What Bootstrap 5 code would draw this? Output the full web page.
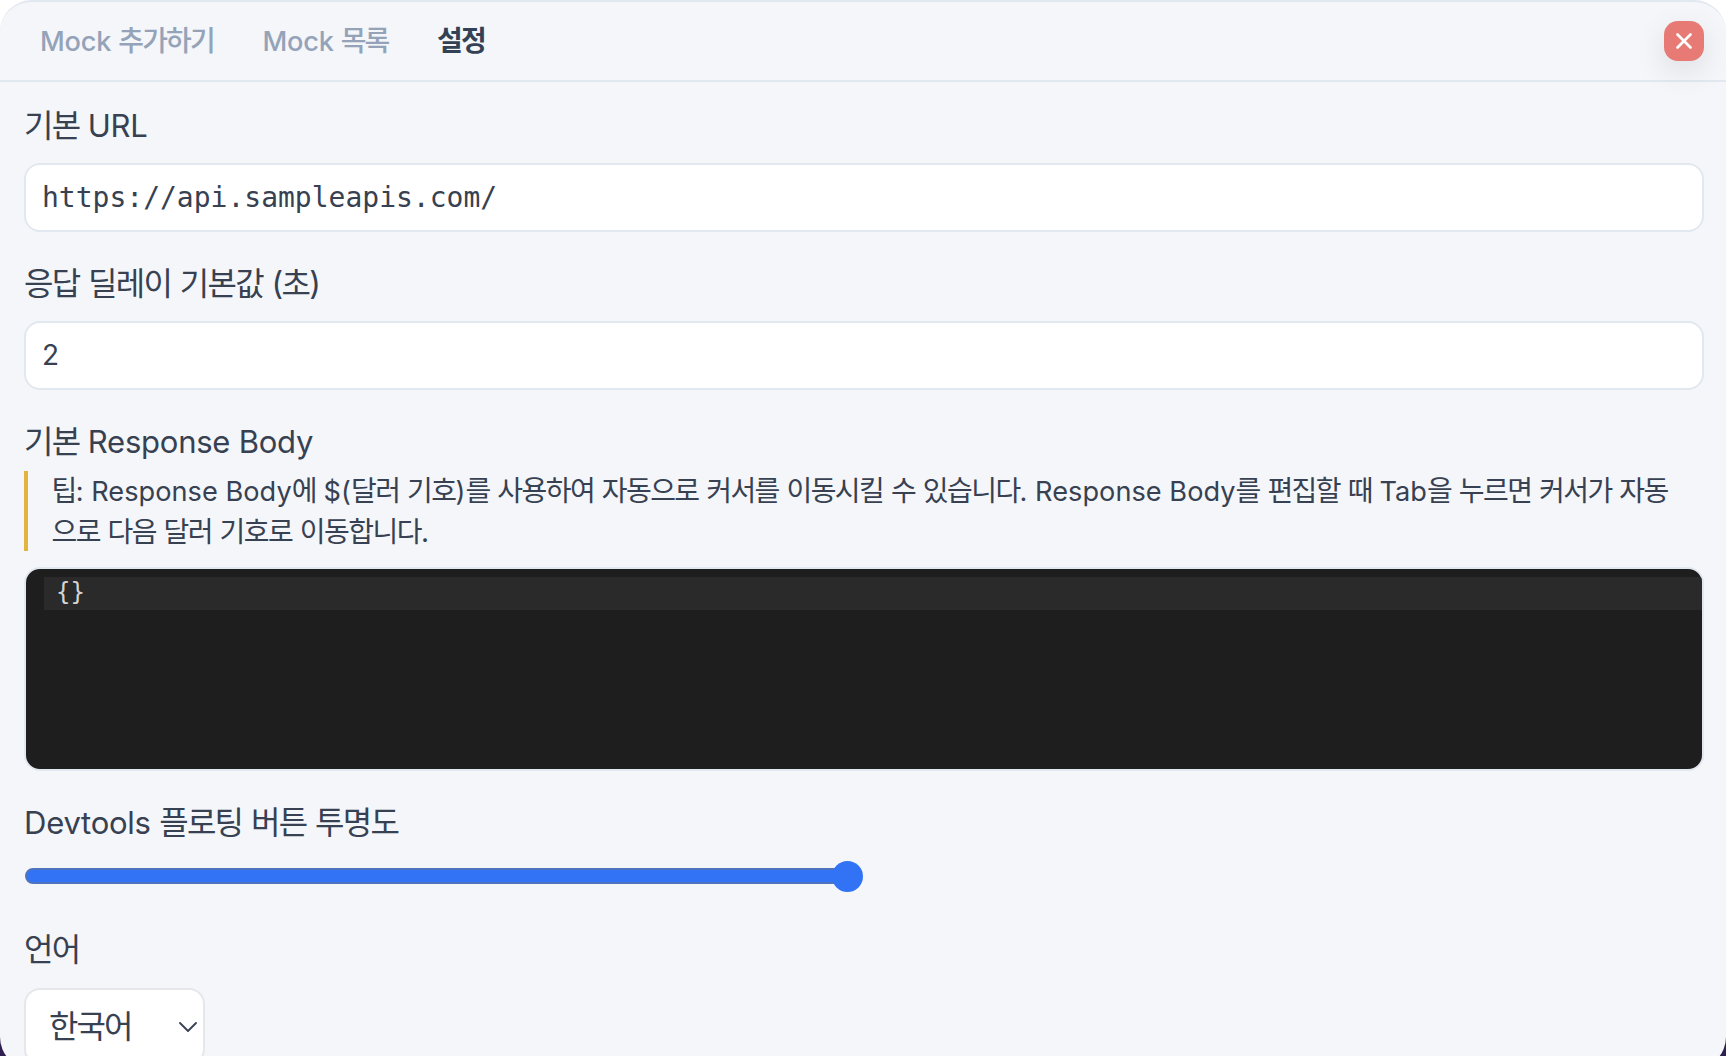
<!DOCTYPE html>
<html lang="ko">
<head>
<meta charset="utf-8">
<meta name="viewport" content="width=device-width, initial-scale=1">
<title>설정</title>
<link href="https://cdn.jsdelivr.net/npm/bootstrap@5.3.0/dist/css/bootstrap.min.css" rel="stylesheet">
<style>
html,body{height:100%}
body{overflow:hidden;color:#374151;font-family:Inter,"Noto Sans CJK KR",sans-serif;background:linear-gradient(#fff 50%,#2f1f50 50%)}
.panel{height:1069px;background:#f4f6fa;border-top:2px solid #e2e8f0;border-radius:32px}
.panel-head{height:80px;border-bottom:2px solid #e2e8f0;padding:0 22px 0 40px}
.tab-row{gap:48.5px}
.tab-link{font-size:28px;line-height:40px;font-weight:500;color:#94a3b8;text-decoration:none;white-space:nowrap;letter-spacing:-.065em;padding-top:1px}
.tab-link.current{color:#334155;font-weight:700}
.close-btn{width:40px;height:40px;border-radius:14px;background:#e77a74;box-shadow:0 10px 30px rgba(0,0,0,.1)}
.panel-main{padding:20px 22px 0 24px}
.field-label{font-size:32px;line-height:48px;height:48px;white-space:nowrap;letter-spacing:-.056em;word-spacing:.05em}
.field-box{margin-top:13px;height:69px;border:2px solid #e2e8f0;border-radius:16px;font-size:28px;padding:0 16px 2px}
.field-box.mono-text{font-family:"DejaVu Sans Mono",monospace;padding-bottom:0}
.sec{margin-top:28px}
.tip-text{margin-top:5px;height:80px;border-left:4px solid #e2b53e;padding-left:23.5px;font-size:28px;line-height:40px;white-space:nowrap;letter-spacing:-.055em;word-spacing:.045em}
.field-label .en,.tab-link .en{font-size:.97em;letter-spacing:-.008em;word-spacing:0}
.tip-text .en{font-size:.97em;letter-spacing:.001em;word-spacing:0}
.editor{margin-top:16px;height:204px;border:2px solid #e2e8f0;border-radius:16px;background:#1e1e1e;padding:8px 0 0 18px;overflow:hidden}
.editor-line{height:33px;background:#2a2a2a;color:#d4d4d4;font:24px/31px "DejaVu Sans Mono",monospace;padding-left:12px}
.slider{margin-top:14px;width:839px;height:30px}
.slider-track{height:16px;border-radius:8px;background:#3273f6;border:2px solid #4f74bd;margin-left:1px;margin-right:14px}
.slider-thumb{width:31px;height:31px;margin-left:-31px;background:#3273f6;position:relative}
.sec-last{margin-top:35px}
.lang-select{margin-top:14px;width:181px;height:77px;border:2px solid #e5e7eb;border-radius:16px;font-size:32px;letter-spacing:-.06em;padding:0 6px 0 23px}
</style>
<script src="https://cdn.jsdelivr.net/npm/bootstrap@5.3.0/dist/js/bootstrap.bundle.min.js"></script>
</head>
<body>
<div class="panel">
  <header class="panel-head d-flex align-items-center justify-content-between">
    <nav class="tab-row d-flex">
      <a class="tab-link" href="#"><span class="en">Mock </span>추가하기</a>
      <a class="tab-link" href="#"><span class="en">Mock </span>목록</a>
      <a class="tab-link current" href="#">설정</a>
    </nav>
    <button class="close-btn btn border-0 p-0 d-flex align-items-center justify-content-center" aria-label="닫기">
      <svg width="20" height="20" viewBox="0 0 20 20" fill="none" stroke="#fff" stroke-width="2.7" stroke-linecap="round"><path d="M3.5 3.5 16.5 16.5M16.5 3.5 3.5 16.5"/></svg>
    </button>
  </header>
  <main class="panel-main">
    <section>
      <div class="field-label">기본<span class="en"> URL</span></div>
      <div class="field-box mono-text bg-white d-flex align-items-center">https://api.sampleapis.com/</div>
    </section>
    <section class="sec">
      <div class="field-label">응답 딜레이 기본값 (초)</div>
      <div class="field-box bg-white d-flex align-items-center">2</div>
    </section>
    <section class="sec">
      <div class="field-label">기본<span class="en"> Response Body</span></div>
      <div class="tip-text">팁<span class="en">: Response Body</span>에<span class="en"> $(</span>달러 기호<span class="en">)</span>를 사용하여 자동으로 커서를 이동시킬 수 있습니다<span class="en">. Response Body</span>를 편집할 때 <span class="en">Tab</span>을 누르면 커서가 자동<br>으로 다음 달러 기호로 이동합니다.</div>
      <div class="editor"><div class="editor-line">{}</div></div>
    </section>
    <section class="sec">
      <div class="field-label"><span class="en">Devtools </span>플로팅 버튼 투명도</div>
      <div class="slider d-flex align-items-center"><div class="slider-track flex-grow-1"></div><div class="slider-thumb rounded-circle"></div></div>
    </section>
    <section class="sec-last">
      <div class="field-label">언어</div>
      <div class="lang-select bg-white d-flex align-items-center justify-content-between">한국어
        <svg width="18" height="12" viewBox="0 0 18 12" fill="none" stroke="#374151" stroke-width="1.8" stroke-linecap="round" stroke-linejoin="round"><path d="M1 2l8 8 8-8"/></svg>
      </div>
    </section>
  </main>
</div>
</body>
</html>
